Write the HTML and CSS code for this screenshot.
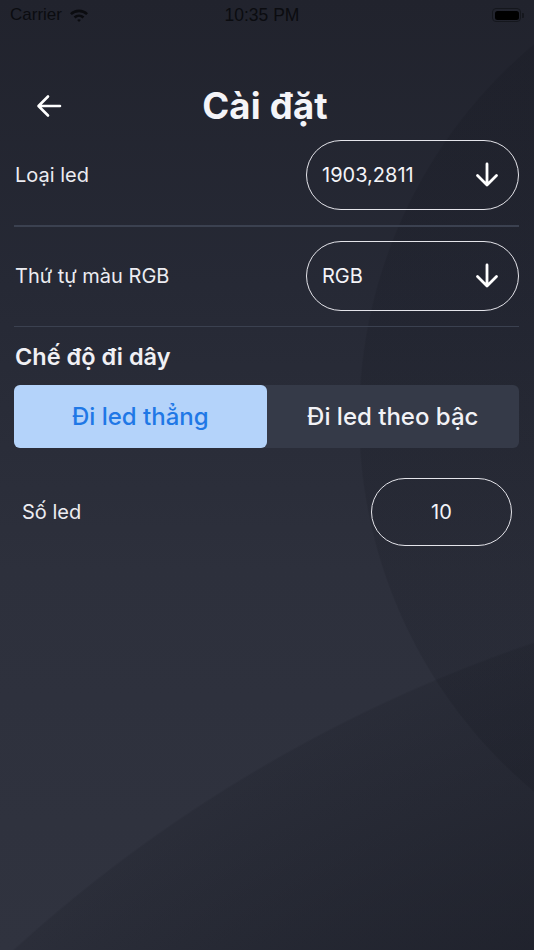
FILE: index.html
```html
<!DOCTYPE html>
<html lang="vi">
<head>
<meta charset="utf-8">
<title>Cài đặt</title>
<link rel="stylesheet" href="styles.css">
</head>
<body>
<div class="screen">
  <div class="status">
    <div class="status-left">
      <span class="carrier">Carrier</span>
      <svg class="wifi" width="20" height="14" viewBox="0 0 20 14">
        <path d="M1 5.2 A13 13 0 0 1 19 5.2 L17.2 7 A10.5 10.5 0 0 0 2.8 7 Z" fill="#0b0c10"/>
        <path d="M4.6 8.6 A8 8 0 0 1 15.4 8.6 L13.6 10.4 A5.5 5.5 0 0 0 6.4 10.4 Z" fill="#0b0c10"/>
        <path d="M8.1 12 A3 3 0 0 1 11.9 12 L10 13.9 Z" fill="#0b0c10"/>
      </svg>
    </div>
    <span class="time">10:35 PM</span>
    <div class="status-right">
      <div class="battery"><div class="battery-fill"></div></div>
      <div class="battery-tip"></div>
    </div>
  </div>

  <div class="header">
    <svg class="back" width="26" height="26" viewBox="0 0 26 26">
      <path d="M24 13 H3 M12 3.5 L2.5 13 L12 22.5" fill="none" stroke="#ffffff" stroke-width="2.6" stroke-linecap="round" stroke-linejoin="round"/>
    </svg>
    <h1 class="title">Cài đặt</h1>
  </div>

  <div class="content">
    <div class="row">
      <span class="label">Loại led</span>
      <div class="pill select">
        <span class="pill-text">1903,2811</span>
        <svg class="down" width="26" height="26" viewBox="0 0 26 26">
          <path d="M13 2 V23 M3.5 13.5 L13 23 L22.5 13.5" fill="none" stroke="#ffffff" stroke-width="2.8" stroke-linecap="round" stroke-linejoin="round"/>
        </svg>
      </div>
    </div>
    <div class="divider"></div>
    <div class="row">
      <span class="label">Thứ tự màu RGB</span>
      <div class="pill select">
        <span class="pill-text">RGB</span>
        <svg class="down" width="26" height="26" viewBox="0 0 26 26">
          <path d="M13 2 V23 M3.5 13.5 L13 23 L22.5 13.5" fill="none" stroke="#ffffff" stroke-width="2.8" stroke-linecap="round" stroke-linejoin="round"/>
        </svg>
      </div>
    </div>
    <div class="divider"></div>

    <h2 class="section">Chế độ đi dây</h2>
    <div class="segmented">
      <div class="seg active">Đi led thẳng</div>
      <div class="seg">Đi led theo bậc</div>
    </div>

    <div class="row count-row">
      <span class="label">Số led</span>
      <div class="pill count">10</div>
    </div>
  </div>
</div>
</body>
</html>
```

FILE: styles.css
```css
* { box-sizing: border-box; }

html, body {
  margin: 0;
  padding: 0;
}

body {
  font-family: Inter, "Noto Sans", sans-serif;
  background: #23252f;
}

.screen {
  width: 534px;
  height: 950px;
  overflow: hidden;
  color: #ececf1;
  background:
    radial-gradient(circle 1480px at 1010px 2043px, rgba(10, 12, 20, 0.42) 1190px, rgba(10, 12, 20, 0.13) 1478px, transparent 1480px),
    radial-gradient(circle 487px at 846px 418px, rgba(12, 14, 22, 0.14) 486px, transparent 487.5px),
    linear-gradient(180deg, #21232d 0%, #262935 30%, #2d303c 60%, #30333f 100%);
}

/* status bar */
.status {
  height: 30px;
  display: grid;
  grid-template-columns: 1fr auto 1fr;
  align-items: center;
  padding: 0 10px;
  font-family: "Liberation Sans", Arial, sans-serif;
  color: #0b0c10;
  font-size: 17px;
}

.status-left {
  display: flex;
  align-items: center;
  gap: 7px;
}

.wifi { margin-top: 0; }

.time {
  font-weight: 500;
  font-size: 17.5px;
  transform: translateX(-5px);
}

.status-right {
  display: flex;
  justify-content: flex-end;
  align-items: center;
}

.battery {
  width: 29px;
  height: 14px;
  border: 1px solid #15171d;
  border-radius: 4px;
  padding: 1.5px;
}

.battery-fill {
  width: 100%;
  height: 100%;
  background: #000;
  border-radius: 2.5px;
}

.battery-tip {
  width: 2px;
  height: 5px;
  background: #15171d;
  border-radius: 0 1px 1px 0;
  margin-left: 1px;
}

/* header */
.header {
  height: 110px;
  display: grid;
  grid-template-columns: 1fr auto 1fr;
  align-items: center;
  padding: 42px 36px 0 36px;
}

.back { display: block; grid-column: 1; }

.title {
  grid-column: 2;
  margin: 0;
  font-size: 36.5px;
  font-weight: 700;
  color: #f4f4f8;
  letter-spacing: 0.2px;
  transform: translateX(-2px);
}

/* content */
.content {
  padding: 0 15px 0 14px;
}

.row {
  display: flex;
  align-items: center;
  justify-content: space-between;
  height: 70px;
}

.label {
  font-size: 20px;
  color: #ececf1;
  padding-left: 1px;
}

.pill {
  border: 1.5px solid #e4e4ea;
  border-radius: 36px;
  color: #f4f4f8;
  font-size: 20px;
}

.select {
  width: 213px;
  height: 70px;
  display: flex;
  align-items: center;
  justify-content: space-between;
  padding: 0 18px 0 15px;
}

.down { display: block; }

.divider {
  height: 1.5px;
  background: #3b4150;
  margin: 15px 0 14px;
}

.section {
  margin: 15px 0 0 1px;
  font-size: 23.5px;
  font-weight: 600;
  color: #f0f0f4;
  line-height: 30px;
}

.segmented {
  margin-top: 13px;
  display: grid;
  grid-template-columns: 1fr 1fr;
  height: 63px;
  border-radius: 6px;
  background: #353a48;
}

.seg {
  display: flex;
  align-items: center;
  justify-content: center;
  font-size: 24px;
  font-weight: 500;
  color: #f2f2f6;
}

.seg.active {
  background: #b4d3fa;
  color: #1f78e6;
  border-radius: 6px;
}

.count-row {
  margin-top: 30px;
  height: 68px;
  padding: 0 7px 0 7px;
}

.count {
  width: 141px;
  height: 68px;
  display: flex;
  align-items: center;
  justify-content: center;
  border-radius: 34px;
}
```
